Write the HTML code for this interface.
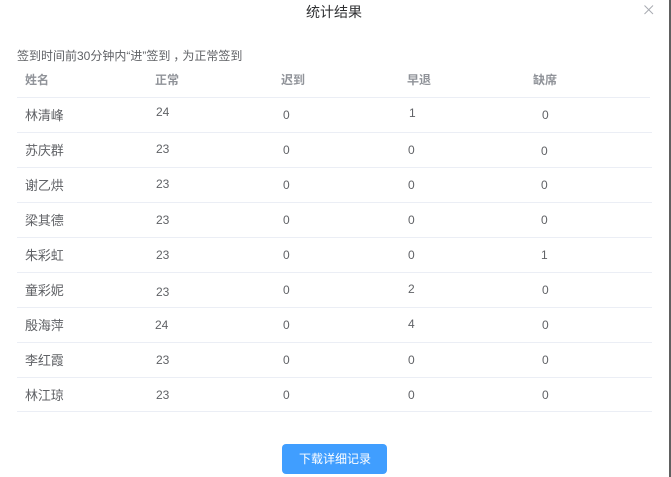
<!DOCTYPE html>
<html lang="zh"><head><meta charset="utf-8">
<style>
html,body{margin:0;padding:0;background:#fff}
#p{position:relative;width:671px;height:477px;overflow:hidden;background:#fff;font-family:"Liberation Sans","Noto Sans CJK SC",sans-serif;color:#606266;font-size:12px}
#p span,#p i{position:absolute;white-space:nowrap;line-height:16px;font-style:normal}
.l{position:absolute;left:17px;width:635px;height:1px;background:#ebeef5}
.n{font-size:13px;left:25px;letter-spacing:-.1px}
.h{font-weight:bold;color:#909399;top:72px}
b{font-weight:normal;position:relative;left:3px}
</style></head><body><div id="p">
<span style="left:306px;top:4px;font-size:14px;color:#303133">统计结果</span>
<svg style="position:absolute;left:644px;top:5px" width="10" height="10"><path d="M.5 .5L9 9M9 .5L.5 9" stroke="#a8abb2" stroke-width="1" fill="none"/></svg>
<div style="position:absolute;left:669px;top:0;width:2px;height:477px;background:#606060"></div>
<span style="left:17px;top:48px">签到时间前30分钟内“进”签到<b>，</b>为正常签到</span>
<span class="h" style="left:25px">姓名</span><span class="h" style="left:155px">正常</span><span class="h" style="left:281px">迟到</span><span class="h" style="left:407px">早退</span><span class="h" style="left:533px">缺席</span>
<div class="l" style="top:97px;width:633px"></div><div class="l" style="top:132px"></div><div class="l" style="top:167px"></div><div class="l" style="top:202px"></div><div class="l" style="top:237px"></div><div class="l" style="top:272px"></div><div class="l" style="top:307px"></div><div class="l" style="top:342px"></div><div class="l" style="top:377px"></div><div class="l" style="top:411px"></div>

<span class="n" style="top:108px">林清峰</span><span style="left:156px;top:104px">24</span><span style="left:283px;top:107px">0</span><span style="left:409px;top:105px">1</span><span style="left:542px;top:107px">0</span>
<span class="n" style="top:143px">苏庆群</span><span style="left:156px;top:141px">23</span><span style="left:283px;top:142px">0</span><span style="left:408px;top:142px">0</span><span style="left:541px;top:143px">0</span>
<span class="n" style="top:178px">谢乙烘</span><span style="left:156px;top:176px">23</span><span style="left:283px;top:177px">0</span><span style="left:408px;top:177px">0</span><span style="left:541px;top:177px">0</span>
<span class="n" style="top:213px">梁其德</span><span style="left:156px;top:212px">23</span><span style="left:283px;top:212px">0</span><span style="left:408px;top:212px">0</span><span style="left:541px;top:212px">0</span>
<span class="n" style="top:248px">朱彩虹</span><span style="left:156px;top:247px">23</span><span style="left:283px;top:247px">0</span><span style="left:408px;top:247px">0</span><span style="left:541px;top:247px">1</span>
<span class="n" style="top:283px">童彩妮</span><span style="left:156px;top:284px">23</span><span style="left:283px;top:282px">0</span><span style="left:408px;top:281px">2</span><span style="left:542px;top:282px">0</span>
<span class="n" style="top:318px">殷海萍</span><span style="left:155px;top:317px">24</span><span style="left:283px;top:317px">0</span><span style="left:408px;top:316px">4</span><span style="left:542px;top:317px">0</span>
<span class="n" style="top:353px">李红霞</span><span style="left:156px;top:352px">23</span><span style="left:283px;top:352px">0</span><span style="left:408px;top:352px">0</span><span style="left:542px;top:352px">0</span>
<span class="n" style="top:388px">林江琼</span><span style="left:156px;top:387px">23</span><span style="left:283px;top:387px">0</span><span style="left:408px;top:387px">0</span><span style="left:542px;top:387px">0</span>

<div style="position:absolute;left:282px;top:444px;width:105px;height:30px;border-radius:4px;background:#409eff"></div>
<span style="left:299px;top:451px;color:#fff">下载详细记录</span>
</div></body></html>
